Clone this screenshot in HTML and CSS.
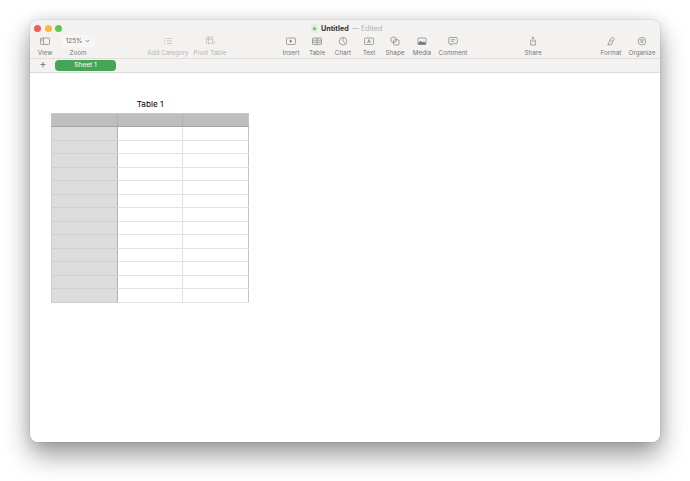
FILE: index.html
```html
<!DOCTYPE html>
<html lang="en">
<head>
<meta charset="utf-8">
<title>Untitled</title>
<link rel="stylesheet" href="styles.css">
</head>
<body>
<div class="window">
  <header class="toolbar">
    <div class="titlebar">
      <div class="lights"><span class="light red"></span><span class="light yellow"></span><span class="light green"></span></div>
      <div class="title">
        <svg class="doc" width="7" height="9" viewBox="0 0 7 9"><rect x="0" y="0" width="7" height="9" rx="1" fill="#e4efe0"/><path d="M3.5 2.2 4.2 3.8 5.8 4 4.6 5.1 5 6.8 3.5 5.9 2 6.8 2.4 5.1 1.2 4 2.8 3.8Z" fill="#6cc06a"/></svg>
        <span class="name">Untitled</span><span class="edited">— Edited</span>
      </div>
    </div>
    <div class="tools">
      <div class="tool w-view"><svg class="ico" viewBox="0 0 12 10"><rect x="1.500" y="2" width="9" height="6.500" rx="1"/><path d="M4.500 2v6.500M2.400 3.600h1.200M2.400 4.900h1.200"/></svg><span>View</span></div>
      <div class="tool w-zoom"><div class="zoombtn">125% <svg class="chev" viewBox="0 0 6 4"><path d="M1 1l2 2 2-2"/></svg></div><span>Zoom</span></div>
      <div class="tool w-cat off"><svg class="ico" viewBox="0 0 12 10"><path d="M2 2.500h1.500M5 2.500h5M2 5h1.500M5 5h5M2 7.500h1.500M5 7.500h5"/></svg><span>Add Category</span></div>
      <div class="tool w-pivot off"><svg class="ico" viewBox="0 0 12 10"><rect x="2.500" y="1" width="6" height="6.500" rx=".8"/><path d="M2.500 3.200h6M4.600 1v6.500M10 5v2.500l-1 1"/></svg><span>Pivot Table</span></div>
      <div class="tool w-insert"><svg class="ico" viewBox="0 0 12 10"><rect x="1.500" y="2" width="9" height="6.500" rx=".8"/><path d="M4.800 3.600 7.400 5.200 4.800 6.800Z" class="solid"/></svg><span>Insert</span></div>
      <div class="tool w-24"><svg class="ico" viewBox="0 0 12 10"><rect x="1.500" y="2" width="9" height="6.500" rx=".8"/><path d="M1.500 4.200h9M1.500 6.300h9M6 2v6.500"/></svg><span>Table</span></div>
      <div class="tool w-24"><svg class="ico" viewBox="0 0 12 10"><circle cx="6" cy="5.200" r="3.800"/><path d="M6 1.400v3.800l2.700 2.700"/></svg><span>Chart</span></div>
      <div class="tool w-24"><svg class="ico" viewBox="0 0 12 10"><rect x="1.500" y="2" width="9" height="6.500" rx=".8"/><path d="M4.500 7 6 3.400 7.500 7M5 5.900h2"/></svg><span>Text</span></div>
      <div class="tool w-26"><svg class="ico" viewBox="0 0 12 10"><rect x="4.500" y="3.800" width="5.500" height="5.200" rx="1"/><circle cx="4.600" cy="3.800" r="2.800"/></svg><span>Shape</span></div>
      <div class="tool w-26"><svg class="ico" viewBox="0 0 12 10"><rect x="2" y="2" width="8" height="6.500" rx=".8"/><path d="M2 7.500 4.500 4.800 6.500 6.500 8 5.400 10 7.600V8.500H2Z" class="solid"/></svg><span>Media</span></div>
      <div class="tool w-comment"><svg class="ico" viewBox="0 0 12 10"><path d="M2.700 1.500h6.600a1 1 0 0 1 1 1v4.200a1 1 0 0 1-1 1H5.500L3.800 9.300V7.700H2.700a1 1 0 0 1-1-1V2.500a1 1 0 0 1 1-1Z"/><path d="M3.800 3.700h4.400M3.800 5.400h3"/></svg><span>Comment</span></div>
      <div class="tool w-share"><svg class="ico" viewBox="0 0 12 10"><path d="M4.500 4H3.700v5h4.600V4h-.8M6 6V1M4.700 2.200 6 1l1.300 1.200"/></svg><span>Share</span></div>
      <div class="tool w-format"><svg class="ico" viewBox="0 0 12 10"><path d="M7.500 1 9.300 3 7.700 5.800 5.200 4Z"/><path d="M5.200 4 2.800 9 6.600 8.400 7.700 5.800"/></svg><span>Format</span></div>
      <div class="tool w-org"><svg class="ico" viewBox="0 0 12 10"><circle cx="6" cy="5.200" r="3.800"/><path d="M3.800 3.900h4.400M4.400 5.200h3.200M5.100 6.500h1.800"/></svg><span>Organize</span></div>
    </div>
  </header>
  <nav class="tabs">
    <span class="plus">+</span>
    <span class="tab">Sheet 1</span>
  </nav>
  <main class="canvas">
    <h1 class="tname">Table 1</h1>
    <table class="sheet">
      <thead><tr><th></th><th></th><th></th></tr></thead>
      <tbody>
        <tr><th></th><td></td><td></td></tr>
        <tr><th></th><td></td><td></td></tr>
        <tr><th></th><td></td><td></td></tr>
        <tr><th></th><td></td><td></td></tr>
        <tr><th></th><td></td><td></td></tr>
        <tr><th></th><td></td><td></td></tr>
        <tr><th></th><td></td><td></td></tr>
        <tr><th></th><td></td><td></td></tr>
        <tr><th></th><td></td><td></td></tr>
        <tr><th></th><td></td><td></td></tr>
        <tr><th></th><td></td><td></td></tr>
        <tr><th></th><td></td><td></td></tr>
        <tr><th></th><td></td><td></td></tr>
      </tbody>
    </table>
  </main>
</div>
</body>
</html>
```
FILE: styles.css
```css
* { box-sizing: border-box; }
html, body { margin: 0; height: 100%; background: #fff; overflow: hidden; }
body { padding: 20px 30px 39px; font-family: Inter, "Liberation Sans", sans-serif; }

.window {
  height: 422px;
  display: flex;
  flex-direction: column;
  background: #fff;
  border-radius: 8px;
  overflow: hidden;
  box-shadow: 0 0 1px rgba(0,0,0,.45), 0 13px 26px rgba(0,0,0,.4), 0 0 14px rgba(0,0,0,.1);
}

.toolbar {
  height: 39px;
  flex: none;
  background: #f3f2f0;
  border-bottom: 1px solid #e0dfdd;
  display: flex;
  flex-direction: column;
}
.titlebar { height: 15px; flex: none; display: flex; align-items: center; padding: 1px 0 0 4px; }
.lights { display: flex; gap: 3.500px; width: 277px; }
.light { width: 7px; height: 7px; border-radius: 50%; }
.red { background: #ee5f57; }
.yellow { background: #f5bb3c; }
.green { background: #5fc552; }
.title { display: flex; align-items: center; font-size: 7.200px; gap: 3px; white-space: nowrap; }
.name { font-weight: 700; color: #333; }
.edited { color: #b0b0b0; }
.doc { display: block; }

.tools { display: flex; align-items: flex-start; padding-left: 5px; }
.tool {
  flex: none;
  display: flex;
  flex-direction: column;
  align-items: center;
  height: 22px;
  font-size: 6.300px;
  line-height: 8px;
  color: #777;
  white-space: nowrap;
}
.tool > span { margin-top: 3px; }
.off { opacity: .5; }
.ico { width: 12px; height: 10px; margin-top: 1px; fill: none; stroke: #777; stroke-width: .65; display: block; }
.ico .solid { fill: #777; stroke: none; }
.w-view { width: 20px; }
.w-zoom { width: 36px; margin-left: 5px; }
.w-cat { width: 42px; margin-left: 51px; }
.w-pivot { width: 38px; margin-left: 2px; }
.w-insert { width: 24px; margin-left: 50px; }
.w-24 { width: 24px; margin-left: 2px; }
.w-26 { width: 26px; margin-left: 1px; }
.w-comment { width: 32px; margin-left: 2px; }
.w-share { width: 24px; margin-left: 52px; }
.w-format { width: 26px; margin-left: 53px; }
.w-org { width: 32px; margin-left: 2px; }
.zoombtn {
  width: 33px;
  height: 12px;
  border-radius: 3px;
  background: #f7f6f5;
  display: flex;
  align-items: center;
  justify-content: center;
  gap: 3px;
  font-size: 6.300px;
  color: #666;
}
.chev { width: 5px; height: 4px; fill: none; stroke: #666; stroke-width: 1; }
.w-zoom > span { margin-top: 2px; }

.tabs {
  height: 14px;
  flex: none;
  background: #f3f2f0;
  border-bottom: 1px solid #dcdbd9;
  display: flex;
  align-items: center;
  padding-left: 9px;
}
.plus { width: 8px; margin-top: -3px; text-align: center; font-size: 11px; line-height: 12px; color: #777; }
.tab {
  margin-left: 8px;
  width: 61px;
  height: 11px;
  border-radius: 4px;
  background: #45a455;
  color: #f0f8f0;
  font-size: 6.500px;
  font-weight: 500;
  line-height: 11px;
  text-align: center;
}

.canvas { flex: 1; background: #fff; padding: 25px 0 0 21px; }
.tname {
  margin: 0;
  width: 198px;
  height: 15px;
  font-size: 8.200px;
  font-weight: 400;
  line-height: 12px;
  text-align: center;
  color: #000;
}
.sheet {
  border-collapse: collapse;
  table-layout: fixed;
  width: 197.600px;
}
.sheet th, .sheet td { padding: 0; height: 13.500px; }
.sheet thead th:first-child { width: 66px; }
.sheet thead th {
  height: 13px;
  background: #bdbfbd;
  border-left: 1px solid #b2b4b2;
  border-bottom: 1px solid #a3a5a3;
  border-top: 1px solid #c9c9c9;
}
.sheet thead th:first-child { border-left: 1px solid #c4c4c4; }
.sheet thead th:last-child { border-right: 1px solid #c4c4c4; }
.sheet tbody th {
  background: #dcdcdc;
  border-bottom: 1px solid #cfcfcf;
  border-left: 1px solid #cfcfcf;
  border-right: 1px solid #b4b4b4;
}
.sheet tbody td { background: #fff; border-bottom: 1px solid #e3e3e3; border-right: 1px solid #e0e0e0; }
.sheet tbody td:last-child { border-right: 1px solid #c4c4c4; }
```
